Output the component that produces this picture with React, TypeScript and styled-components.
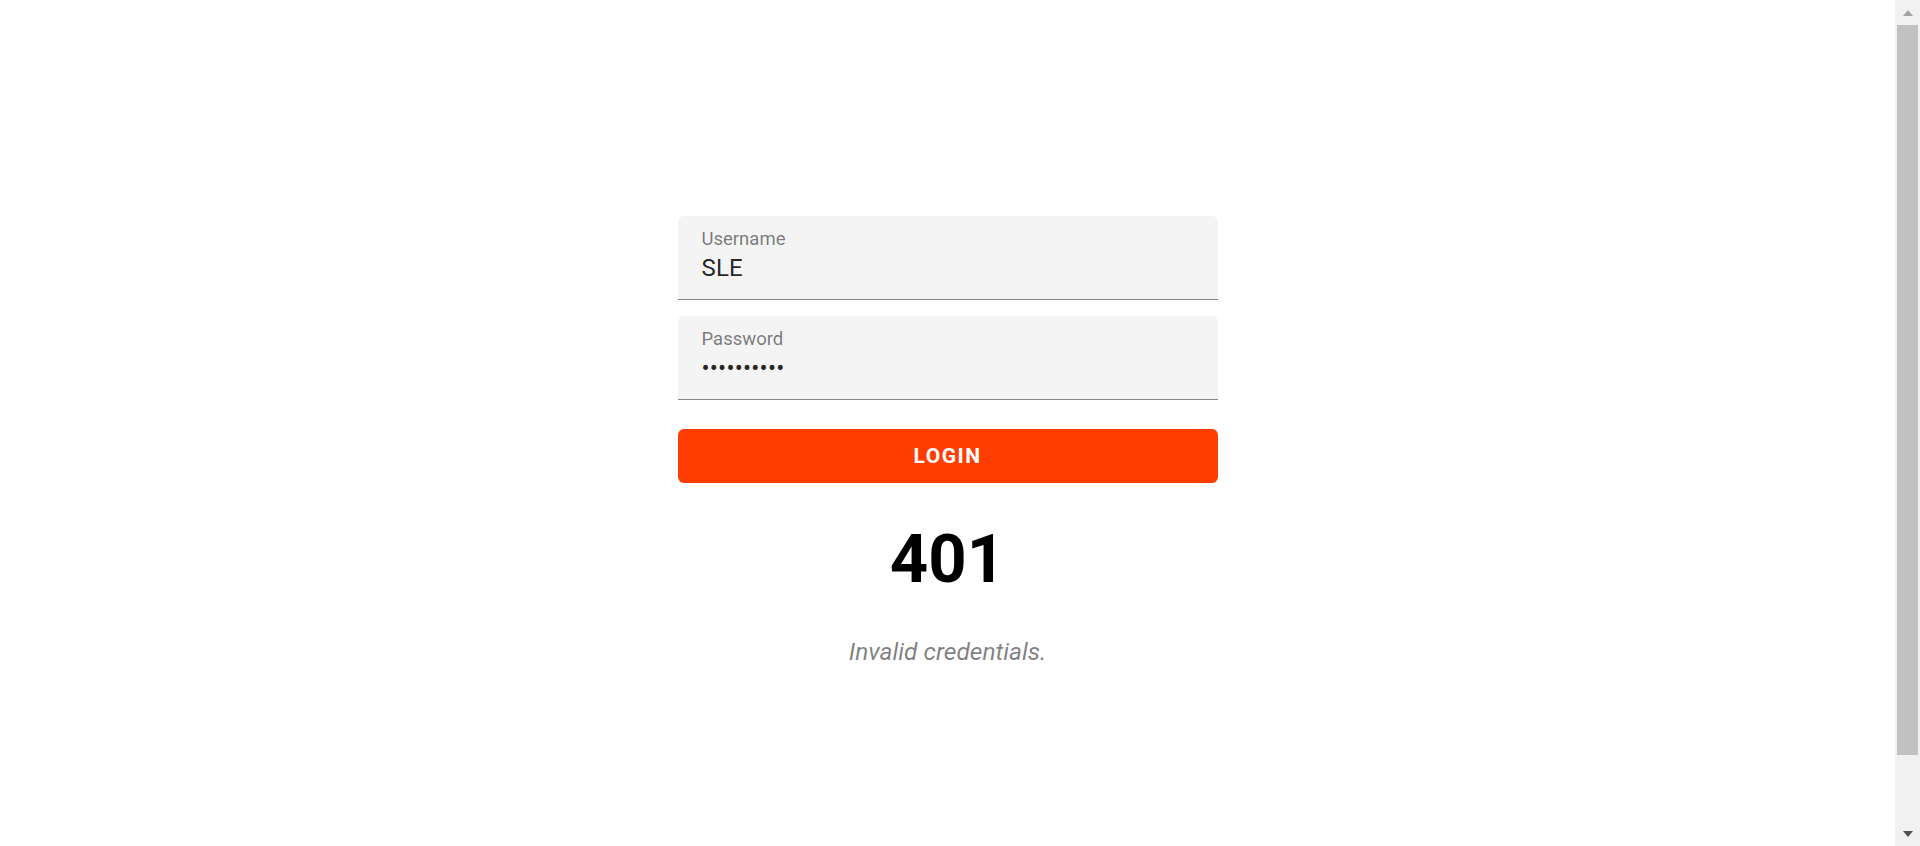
import React, { FC } from 'react';
import styled, { createGlobalStyle } from 'styled-components';

const GlobalStyle = createGlobalStyle`
    html, body {
        margin: 0;
        padding: 0;
        height: 100%;
        overflow: hidden;
        background: #ffffff;
        font-family: Roboto, "Liberation Sans", Arial, sans-serif;
    }
    * {
        box-sizing: border-box;
    }
`;

const Page = styled.div`
    display: flex;
    height: 100vh;
    width: 100vw;
`;

const Main = styled.main`
    flex: 1;
    display: flex;
    flex-direction: column;
    align-items: center;
    padding-top: 216px;
`;

const Form = styled.form`
    width: 540px;
    display: flex;
    flex-direction: column;
`;

const Field = styled.div<{ $gap?: number }>`
    height: 84px;
    margin-bottom: ${(p) => p.$gap ?? 0}px;
    padding: 14px 23px 0 24px;
    background: #f4f4f4;
    border-radius: 6px 6px 0 0;
    border-bottom: 1px solid rgba(0, 0, 0, 0.45);
    display: flex;
    flex-direction: column;
`;

const Label = styled.label`
    font-size: 18.5px;
    line-height: 18px;
    color: rgba(0, 0, 0, 0.52);
`;

const Input = styled.input`
    margin-top: 6px;
    height: 28px;
    padding: 0;
    border: none;
    outline: none;
    background: transparent;
    font-family: Roboto, "Liberation Sans", Arial, sans-serif;
    font-size: 24px;
    letter-spacing: 0.2px;
    color: rgba(0, 0, 0, 0.87);
`;

const Button = styled.button`
    height: 54px;
    border: none;
    border-radius: 6px;
    background: #ff3d00;
    color: #ffffff;
    font-family: Roboto, "Liberation Sans", Arial, sans-serif;
    font-size: 21px;
    font-weight: 700;
    letter-spacing: 1.5px;
    text-transform: uppercase;
    cursor: pointer;
`;

const Code = styled.h1`
    margin: 43px 0 0;
    font-size: 67px;
    line-height: 66px;
    font-weight: 700;
    color: #000000;
    text-align: center;
`;

const Message = styled.p`
    margin: 48px 0 0;
    font-size: 24.5px;
    line-height: 24px;
    font-style: italic;
    color: rgba(0, 0, 0, 0.5);
    text-align: center;
`;

// fake scrollbar, as seen on the right of the screenshot
const Scrollbar = styled.div`
    width: 25px;
    background: #f1f1f1;
    display: flex;
    flex-direction: column;
`;

const Arrow = styled.div<{ $down?: boolean }>`
    height: 25px;
    display: flex;
    align-items: center;
    justify-content: center;

    &::before {
        content: '';
        width: 0;
        height: 0;
        border-left: 5px solid transparent;
        border-right: 5px solid transparent;
        ${(p) =>
            p.$down
                ? 'border-top: 6px solid #505050;'
                : 'border-bottom: 6px solid #a3a3a3;'}
    }
`;

const Track = styled.div`
    flex: 1;
    padding: 0 2px;
`;

const Thumb = styled.div`
    height: 730px;
    background: #c1c1c1;
`;

interface FieldProps {
    label: string;
    type: string;
    value: string;
    gap?: number;
}

const TextField: FC<FieldProps> = ({ label, type, value, gap }) => (
    <Field $gap={gap}>
        <Label>{label}</Label>
        <Input type={type} defaultValue={value} readOnly />
    </Field>
);

const App: FC = () => {
    return (
        <>
            <GlobalStyle />
            <Page>
                <Main>
                    <Form onSubmit={(e) => e.preventDefault()}>
                        <TextField label="Username" type="text" value="SLE" gap={16} />
                        <TextField label="Password" type="password" value="secretpass" gap={29} />
                        <Button type="submit">Login</Button>
                    </Form>
                    <Code>401</Code>
                    <Message>Invalid credentials.</Message>
                </Main>
                <Scrollbar>
                    <Arrow />
                    <Track>
                        <Thumb />
                    </Track>
                    <Arrow $down />
                </Scrollbar>
            </Page>
        </>
    );
};

export default App;
